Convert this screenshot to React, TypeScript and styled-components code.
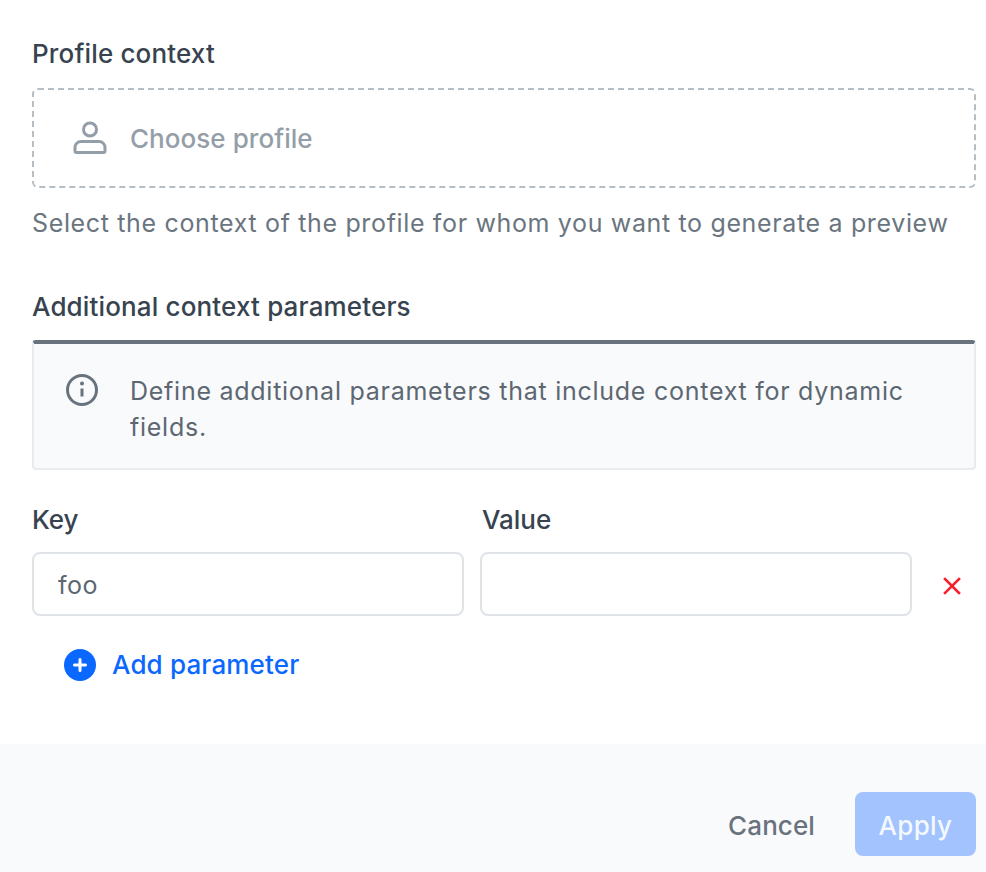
import React from "react";
import styled, { createGlobalStyle } from "styled-components";

const Global = createGlobalStyle`
  html, body { margin: 0; padding: 0; background: #fff; }
  body { font-family: Inter, "Liberation Sans", sans-serif; -webkit-font-smoothing: antialiased; }
`;

const Page = styled.div`
  width: 986px;
  height: 872px;
  display: flex;
  flex-direction: column;
  overflow: hidden;
`;

const Body = styled.div`
  height: 744px;
  box-sizing: border-box;
  padding: 38px 10px 0 32px;
  display: flex;
  flex-direction: column;
`;

const Heading = styled.h2`
  margin: 0;
  font-size: 26px;
  line-height: 32px;
  font-weight: 500;
  color: #384350;
  letter-spacing: 0.15px;
`;

const Picker = styled.div`
  margin-top: 18px;
  height: 100px;
  box-sizing: border-box;
  border: 2px dashed #b5bdc5;
  border-radius: 6px;
  display: flex;
  align-items: center;
  padding: 0 0 0 38px;
  gap: 22px;
`;

const PickerText = styled.span`
  font-size: 26px;
  font-weight: 500;
  color: #949ea8;
  letter-spacing: 0.05px;
`;

const Hint = styled.p`
  margin: 17px 0 0;
  font-size: 25px;
  line-height: 36px;
  color: #6a7580;
  letter-spacing: 0.65px;
  white-space: nowrap;
`;

const SecondHeading = styled(Heading)`
  margin-top: 50px;
`;

const Notice = styled.div`
  margin-top: 17px;
  height: 130px;
  box-sizing: border-box;
  background: #f9fafb;
  border: 2px solid #e9ecef;
  border-top: 4px solid #69737d;
  border-radius: 4px;
  display: flex;
  padding: 29px 32px 0 31px;
  gap: 31px;
`;

const NoticeText = styled.p`
  margin: 0;
  font-size: 25px;
  line-height: 36px;
  color: #5c6772;
  letter-spacing: 0.74px;
`;

const Labels = styled.div`
  margin-top: 34px;
  display: flex;
  gap: 18px;
`;

const FieldLabel = styled.label`
  width: 432px;
  font-size: 26px;
  line-height: 32px;
  font-weight: 500;
  color: #384350;
`;

const Row = styled.div`
  margin-top: 16px;
  display: flex;
  align-items: center;
  gap: 16px;
`;

const Input = styled.input`
  width: 432px;
  height: 64px;
  box-sizing: border-box;
  border: 2px solid #dfe3e7;
  border-radius: 8px;
  background: #fff;
  padding: 2px 24px 0;
  font: 400 25px Inter, "Liberation Sans", sans-serif;
  letter-spacing: 0.5px;
  color: #5c6772;
  outline: none;
`;

const Remove = styled.button`
  width: 48px;
  height: 48px;
  padding: 4px 0 0;
  border: 0;
  background: none;
  display: flex;
  align-items: center;
  justify-content: center;
`;

const AddButton = styled.button`
  margin: 33px 0 0 32px;
  padding: 0;
  border: 0;
  background: none;
  display: flex;
  align-items: center;
  gap: 16px;
  font: 500 26px/32px Inter, "Liberation Sans", sans-serif;
  letter-spacing: 0.15px;
  color: #0b68ff;
`;

const Footer = styled.footer`
  height: 128px;
  box-sizing: border-box;
  background: #f9fafb;
  padding: 48px 10px 16px 0;
  display: flex;
  justify-content: flex-end;
  align-items: flex-start;
`;

const Cancel = styled.button`
  height: 64px;
  padding: 2px 0 0;
  margin-right: 40px;
  border: 0;
  background: none;
  font: 500 26px Inter, "Liberation Sans", sans-serif;
  letter-spacing: 0.1px;
  color: #69737d;
`;

const Apply = styled.button`
  width: 121px;
  height: 64px;
  padding: 2px 0 0;
  border: 0;
  border-radius: 8px;
  background: #a2c3fd;
  font: 500 26px Inter, "Liberation Sans", sans-serif;
  letter-spacing: 0.3px;
  color: #f4f8ff;
`;

export default function App() {
  return (
    <Page>
      <Global />
      <Body>
        <Heading>Profile context</Heading>
        <Picker>
          <svg width="36" height="36" viewBox="0 0 36 36" fill="none" stroke="#949ea8" strokeWidth="3">
            <circle cx="18" cy="9.5" r="6.5" />
            <path d="M9 21.5h18a6 6 0 0 1 6 6v3.5a1.5 1.5 0 0 1-1.5 1.5h-27A1.5 1.5 0 0 1 3 31v-3.5a6 6 0 0 1 6-6z" />
          </svg>
          <PickerText>Choose profile</PickerText>
        </Picker>
        <Hint>Select the context of the profile for whom you want to generate a preview</Hint>
        <SecondHeading>Additional context parameters</SecondHeading>
        <Notice>
          <svg width="34" height="34" viewBox="0 0 34 34" fill="none" stroke="#69737d" strokeWidth="3" style={{ flexShrink: 0 }}>
            <circle cx="17" cy="17" r="14.5" />
            <path d="M17 15.5v8" />
            <circle cx="17" cy="10.5" r="1" strokeWidth="2" />
          </svg>
          <NoticeText>Define additional parameters that include context for dynamic fields.</NoticeText>
        </Notice>
        <Labels>
          <FieldLabel>Key</FieldLabel>
          <FieldLabel>Value</FieldLabel>
        </Labels>
        <Row>
          <Input defaultValue="foo" />
          <Input />
          <Remove aria-label="Remove">
            <svg width="18" height="18" viewBox="0 0 18 18" stroke="#f5222d" strokeWidth="2.6" strokeLinecap="square">
              <path d="M2 2l14 14M16 2L2 16" />
            </svg>
          </Remove>
        </Row>
        <AddButton>
          <svg width="32" height="32" viewBox="0 0 32 32">
            <circle cx="16" cy="16" r="16" fill="#0b68ff" />
            <path d="M16 10.5v11M10.5 16h11" stroke="#fff" strokeWidth="3" strokeLinecap="round" />
          </svg>
          Add parameter
        </AddButton>
      </Body>
      <Footer>
        <Cancel>Cancel</Cancel>
        <Apply>Apply</Apply>
      </Footer>
    </Page>
  );
}
